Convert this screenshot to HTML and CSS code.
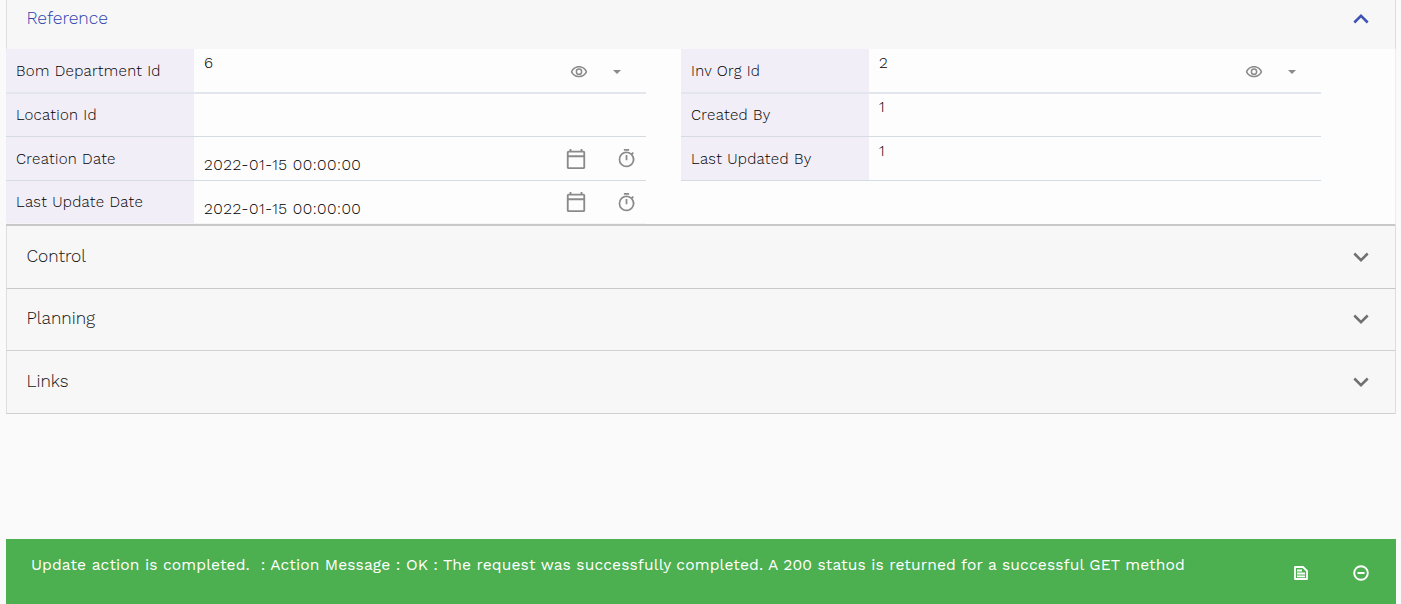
FILE: index.html
```html
<!DOCTYPE html>
<html lang="en">
<head>
<meta charset="utf-8">
<title>Bom Department</title>
<link rel="stylesheet" href="styles.css">
</head>
<body>
<svg class="defs" width="0" height="0">
  <symbol id="eye" viewBox="0 0 24 24"><path d="M12 6c3.790 0 7.170 2.130 8.820 5.500C19.170 14.870 15.790 17 12 17s-7.170-2.130-8.820-5.500C4.830 8.130 8.210 6 12 6m0-2C7 4 2.730 7.110 1 11.500 2.730 15.890 7 19 12 19s9.270-3.110 11-7.500C21.270 7.110 17 4 12 4zm0 5a2.500 2.500 0 0 1 0 5 2.500 2.500 0 0 1 0-5m0-2a4.500 4.500 0 1 0 0 9 4.500 4.500 0 0 0 0-9z"/></symbol>
  <symbol id="caret" viewBox="0 0 8 4"><path d="M0 0h8L4 4z"/></symbol>
  <symbol id="calendar" viewBox="0 0 24 24"><path d="M20 3h-1V1h-2v2H7V1H5v2H4c-1.100 0-2 .9-2 2v16c0 1.100.9 2 2 2h16c1.100 0 2-.9 2-2V5c0-1.100-.9-2-2-2zm0 18H4V10h16v11zm0-13H4V5h16v3z"/></symbol>
  <symbol id="timer" viewBox="0 0 24 24"><path d="M15 1H9v2h6V1zm-4 13h2V8h-2v6zm8.030-6.610l1.420-1.420c-.43-.51-.9-.99-1.410-1.410l-1.420 1.420A8.962 8.962 0 0 0 12 4a9 9 0 0 0 0 18 9 9 0 0 0 7.030-14.610zM12 20c-3.870 0-7-3.130-7-7s3.130-7 7-7 7 3.130 7 7-3.130 7-7 7z"/></symbol>
  <symbol id="chevron" viewBox="0 0 16 10"><path d="M1.300 1.500 8 8.200l6.700-6.700" fill="none" stroke="currentColor" stroke-width="2.500"/></symbol>
  <symbol id="document" viewBox="0 0 14 14"><path d="M1 1h8l4 4v8H1zM3 4.500h5M3 7.500h8M3 10.300h8" fill="none" stroke="currentColor" stroke-width="1.800" stroke-linejoin="round"/></symbol>
  <symbol id="minus" viewBox="0 0 16 16"><path d="M4.500 8h7M8 1.200a6.800 6.800 0 1 0 0 13.600A6.800 6.800 0 0 0 8 1.200z" fill="none" stroke="currentColor" stroke-width="1.900"/></symbol>
</svg>
<main class="accordion">
  <section class="panel">
    <header class="panel-header open"><span>Reference</span><svg class="chevron up"><use href="#chevron"/></svg></header>
    <div class="fields">
      <div class="column">
        <div class="field thick"><label>Bom Department Id</label><div class="value">6</div><svg class="eye"><use href="#eye"/></svg><svg class="caret"><use href="#caret"/></svg></div>
        <div class="field"><label>Location Id</label><div class="value"></div></div>
        <div class="field"><label>Creation Date</label><div class="value date">2022-01-15 00:00:00</div><svg class="calendar"><use href="#calendar"/></svg><svg class="timer"><use href="#timer"/></svg></div>
        <div class="field last"><label>Last Update Date</label><div class="value date">2022-01-15 00:00:00</div><svg class="calendar"><use href="#calendar"/></svg><svg class="timer"><use href="#timer"/></svg></div>
      </div>
      <div class="column">
        <div class="field thick"><label>Inv Org Id</label><div class="value">2</div><svg class="eye"><use href="#eye"/></svg><svg class="caret"><use href="#caret"/></svg></div>
        <div class="field"><label>Created By</label><div class="value">1</div></div>
        <div class="field"><label>Last Updated By</label><div class="value">1</div></div>
      </div>
    </div>
  </section>
  <section class="panel-header control"><span>Control</span><svg class="chevron"><use href="#chevron"/></svg></section>
  <section class="panel-header planning"><span>Planning</span><svg class="chevron"><use href="#chevron"/></svg></section>
  <section class="panel-header links"><span>Links</span><svg class="chevron"><use href="#chevron"/></svg></section>
</main>
<footer class="message"><p>Update action is completed.&nbsp; : Action Message : OK : The request was successfully completed. A 200 status is returned for a successful GET method</p><svg class="document"><use href="#document"/></svg><svg class="minus"><use href="#minus"/></svg></footer>
</body>
</html>
```
FILE: styles.css
```css
* { box-sizing: border-box; }
body { margin: 0; height: 604px; padding: 0 5px 0 6px; overflow: hidden; display: flex; flex-direction: column; background: #fafafa; color: #000; font-family: "Work Sans", Inter, sans-serif; }
svg { display: block; flex: none; fill: currentColor; }
.defs { position: absolute; }
.accordion { height: 414px; }
.panel-header { display: flex; align-items: center; justify-content: space-between; height: 62px; padding: 0 26px 0 19.500px; border: solid #dedede; border-width: 0 1px; background: #f7f7f7; color: #151515; font-size: 17.400px; line-height: 20px; font-weight: 300; }
.panel-header span { padding-bottom: 2px; }
.panel-header.open { height: 49px; padding-bottom: 12px; color: #3044b0; }
.chevron { width: 16px; height: 10px; color: #707070; }
.chevron.up { transform: rotate(180deg); color: #3f51b5; }
.control { height: 63px; border-bottom: 1px solid #c8c8c8; }
.planning { border-bottom: 1px solid #d0d0d0; }
.planning span { padding-bottom: 3px; }
.planning .chevron { margin-bottom: 1px; }
.links { height: 63px; border-bottom: 1px solid #d0d0d0; }
.fields { display: flex; gap: 35px; height: 177px; border-right: 1px solid #eee; border-bottom: 2px solid #c8c8c8; background: #fdfdfd; }
.column { width: 640px; }
.field { display: flex; align-items: center; height: 44px; border-bottom: 1px solid #d4dce2; color: #8a8a8a; }
.field.thick { height: 45px; border-bottom: 2px solid #e3e7ed; }
.field.thick + .field { height: 43px; }
.field.thick + .field .value { padding-top: 3px; }
.field.last { height: 43px; border-bottom-color: #f5f5f5; }
.field label { align-self: stretch; width: 188px; padding-left: 10px; background: #f1eef7; color: #000; font-size: 15px; font-weight: 300; line-height: 44px; letter-spacing: .32px; }
.field.thick + .field label { line-height: 42px; }
.field.last label { line-height: 42px; }
.value { align-self: flex-start; flex: 1; padding: 4px 0 0 10px; color: #000; font-size: 15.600px; font-weight: 300; line-height: 20px; }
.value.date { padding-top: 18px; letter-spacing: .5px; }
.eye { width: 18px; height: 18px; margin: 2px 25px 0 0; }
.caret { width: 8px; height: 4px; margin: 2px 25px 0 0; }
.calendar { width: 22px; height: 22px; margin-right: 28.500px; }
.timer { width: 21px; height: 21px; margin-right: 9.500px; }
.message { display: flex; align-items: center; height: 65px; margin-top: 125px; padding: 3px 27px 0 25px; background: #4caf50; color: #fff; }
.message p { flex: 1; margin: 0; padding-bottom: 17px; font-size: 15.600px; font-weight: 400; line-height: 20px; white-space: nowrap; letter-spacing: .11px; }
.document { width: 14px; height: 14px; margin-right: 45px; }
.minus { width: 16px; height: 16px; }
```
